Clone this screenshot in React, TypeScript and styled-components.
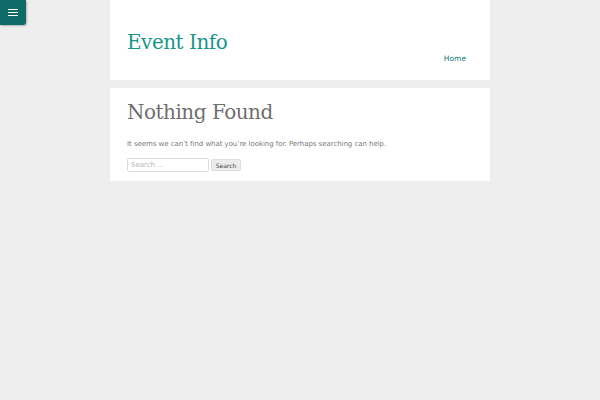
import styled, { createGlobalStyle } from "styled-components";

const GlobalStyle = createGlobalStyle`
  html, body {
    margin: 0;
    padding: 0;
    background: #eeeeee;
    font-family: "DejaVu Sans", Verdana, sans-serif;
  }
`;

const Page = styled.div`
  width: 600px;
  min-height: 400px;
  display: flex;
  flex-direction: column;
  align-items: center;
  gap: 8px;
`;

const MenuToggle = styled.button`
  position: absolute;
  top: 0;
  left: 0;
  width: 26px;
  height: 25px;
  border: none;
  padding: 0;
  background: #0e6b67;
  border-bottom-right-radius: 3px;
  box-shadow: 1px 1px 2px rgba(0, 0, 0, 0.25);
  display: flex;
  flex-direction: column;
  align-items: center;
  justify-content: center;
  gap: 1.5px;
  cursor: pointer;
`;

const Bar = styled.span`
  display: block;
  width: 10px;
  height: 1.5px;
  background: #ffffff;
`;

const Box = styled.div`
  width: 380px;
  background: #ffffff;
  box-sizing: border-box;
`;

const Header = styled(Box)`
  height: 80px;
  padding: 27px 24px 0 17px;
  display: flex;
  justify-content: space-between;
  align-items: flex-start;
`;

const SiteTitle = styled.h1`
  margin: 0;
  font-family: "DejaVu Serif", serif;
  font-weight: normal;
  font-size: 20px;
  line-height: 30px;
  color: #16968b;
  letter-spacing: -0.5px;
`;

const Nav = styled.nav`
  margin-top: 27px;
  font-size: 7.5px;
  color: #157a74;
`;

const Content = styled(Box)`
  padding: 10px 17px 9px;
`;

const PageTitle = styled.h2`
  margin: 0;
  font-family: "DejaVu Serif", serif;
  font-weight: normal;
  font-size: 20px;
  line-height: 28px;
  color: #6f6f6f;
  letter-spacing: -0.5px;
`;

const Lead = styled.p`
  margin: 12px 0 0;
  font-size: 7px;
  line-height: 12px;
  color: #7a7a7a;
  letter-spacing: -0.05px;
`;

const SearchForm = styled.form`
  margin-top: 8px;
  display: flex;
  align-items: center;
  gap: 2px;
`;

const SearchInput = styled.input`
  width: 82px;
  height: 14px;
  box-sizing: border-box;
  border: 1px solid #dcdcdc;
  border-radius: 2px;
  padding: 0 3px;
  font-family: "DejaVu Sans", sans-serif;
  font-size: 7px;
  color: #666;
  &::placeholder {
    color: #b5b5b5;
  }
`;

const SearchButton = styled.button`
  height: 12px;
  width: 30px;
  padding: 0;
  box-sizing: border-box;
  border: 1px solid #dddddd;
  border-radius: 2px;
  background: #ececec;
  font-family: "DejaVu Sans", sans-serif;
  font-size: 6px;
  color: #444;
`;

export default function App() {
  return (
    <>
      <GlobalStyle />
      <MenuToggle aria-label="Menu">
        <Bar />
        <Bar />
        <Bar />
      </MenuToggle>
      <Page>
        <Header>
          <SiteTitle>Event Info</SiteTitle>
          <Nav>Home</Nav>
        </Header>
        <Content>
          <PageTitle>Nothing Found</PageTitle>
          <Lead>
            It seems we can’t find what you’re looking for. Perhaps searching can
            help.
          </Lead>
          <SearchForm onSubmit={(e) => e.preventDefault()}>
            <SearchInput placeholder="Search …" />
            <SearchButton type="submit">Search</SearchButton>
          </SearchForm>
        </Content>
      </Page>
    </>
  );
}
